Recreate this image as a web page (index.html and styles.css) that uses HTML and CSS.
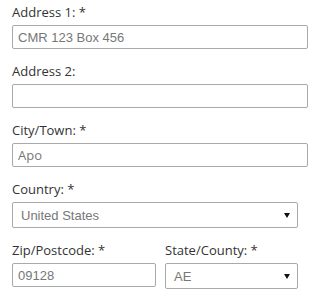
FILE: index.html
```html
<!DOCTYPE html>
<html>
<head>
<meta charset="utf-8">
<link rel="stylesheet" href="styles.css">
</head>
<body>
<form class="form">
  <div class="field">
    <label class="label">Address 1: *</label>
    <div class="input input-wide"><span class="value arial">CMR 123 Box 456</span></div>
  </div>
  <div class="field">
    <label class="label">Address 2:</label>
    <div class="input input-wide"></div>
  </div>
  <div class="field">
    <label class="label">City/Town: *</label>
    <div class="input input-wide"><span class="value">Apo</span></div>
  </div>
  <div class="field">
    <label class="label">Country: *</label>
    <div class="select select-wide"><span class="value arial">United States</span><svg class="arrow" width="6" height="5" viewBox="0 0 6 5"><path d="M0 0H6L3 5Z" fill="#111"/></svg></div>
  </div>
  <div class="row">
    <div class="field">
      <label class="label">Zip/Postcode: *</label>
      <div class="input"><span class="value arial">09128</span></div>
    </div>
    <div class="field">
      <label class="label">State/County: *</label>
      <div class="select"><span class="value arial">AE</span><svg class="arrow" width="6" height="5" viewBox="0 0 6 5"><path d="M0 0H6L3 5Z" fill="#111"/></svg></div>
    </div>
  </div>
</form>
</body>
</html>
```
FILE: styles.css
```css
html, body {
  margin: 0;
  padding: 0;
  background: #fff;
}
.form {
  padding: 3px 14px 0 12px;
  font-family: "Open Sans", "Liberation Sans", sans-serif;
  font-size: 13px;
  color: #333;
}
.field {
  margin-bottom: 13px;
}
.label {
  display: block;
  line-height: 18px;
  margin-bottom: 4px;
}
.input {
  box-sizing: border-box;
  height: 24px;
  border: 1px solid #a9a9a9;
  border-radius: 2px;
  padding: 0 5px;
  display: flex;
  align-items: center;
  background: #fff;
}
.input-wide {
  width: 296px;
}
.value {
  color: #777;
  font-size: 13px;
}
.arial {
  font-family: "Liberation Sans", Arial, sans-serif;
}
.select {
  box-sizing: border-box;
  height: 26px;
  border: 1px solid #a9a9a9;
  border-radius: 2px;
  padding: 0 7px 0 8px;
  display: flex;
  align-items: center;
  justify-content: space-between;
  background: #fff;
}
.select-wide {
  width: 286px;
}
.row {
  display: grid;
  grid-template-columns: 144px 133px;
  column-gap: 9px;
}
.row .field {
  margin-bottom: 0;
}
.arrow {
  display: block;
}
```
